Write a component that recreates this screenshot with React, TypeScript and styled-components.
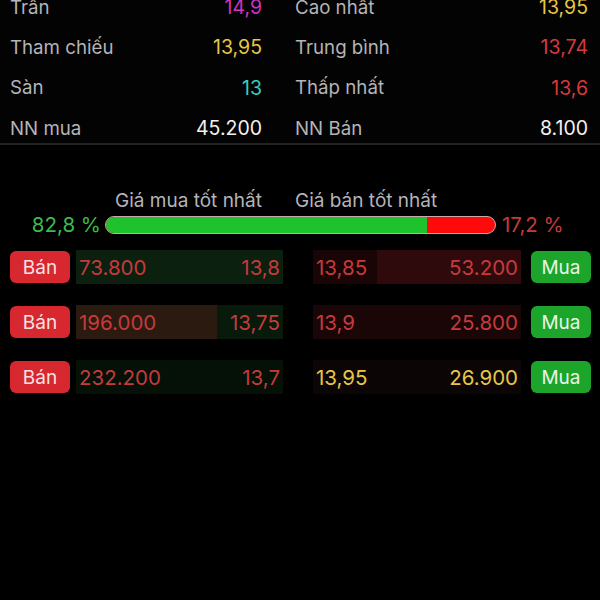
import styled, { createGlobalStyle } from 'styled-components';

const GlobalStyle = createGlobalStyle`
  html, body {
    margin: 0;
    padding: 0;
    background: #000;
    overflow: hidden;
  }
  body {
    font-family: Inter, 'Noto Sans', 'Liberation Sans', sans-serif;
  }
`;

const colors = {
  label: '#b4b4b8',
  white: '#f2f2f2',
  magenta: '#d232c4',
  yellow: '#e8c646',
  cyan: '#35cfc0',
  red: '#d8393c',
  dimRed: '#c63a3c',
  green: '#3dbb4a',
};

type Stat = { label: string; value: string; color: string };

const leftStats: Stat[] = [
  { label: 'Trần', value: '14,9', color: colors.magenta },
  { label: 'Tham chiếu', value: '13,95', color: colors.yellow },
  { label: 'Sàn', value: '13', color: colors.cyan },
  { label: 'NN mua', value: '45.200', color: colors.white },
];

const rightStats: Stat[] = [
  { label: 'Cao nhất', value: '13,95', color: colors.yellow },
  { label: 'Trung bình', value: '13,74', color: colors.red },
  { label: 'Thấp nhất', value: '13,6', color: colors.red },
  { label: 'NN Bán', value: '8.100', color: colors.white },
];

type Order = {
  bidVol: string;
  bidPrice: string;
  bidBg: string;
  bidFill: number;
  bidFillColor: string;
  askPrice: string;
  askVol: string;
  askBg: string;
  askFill: number;
  askFillColor: string;
  askColor: string;
};

const orders: Order[] = [
  {
    bidVol: '73.800',
    bidPrice: '13,8',
    bidBg: '#0c2010',
    bidFill: 0,
    bidFillColor: 'transparent',
    askPrice: '13,85',
    askVol: '53.200',
    askBg: '#1a0506',
    askFill: 69,
    askFillColor: '#2e0a0c',
    askColor: colors.dimRed,
  },
  {
    bidVol: '196.000',
    bidPrice: '13,75',
    bidBg: '#081a0b',
    bidFill: 68,
    bidFillColor: '#2a1a10',
    askPrice: '13,9',
    askVol: '25.800',
    askBg: '#1a0607',
    askFill: 0,
    askFillColor: 'transparent',
    askColor: colors.dimRed,
  },
  {
    bidVol: '232.200',
    bidPrice: '13,7',
    bidBg: '#051006',
    bidFill: 0,
    bidFillColor: 'transparent',
    askPrice: '13,95',
    askVol: '26.900',
    askBg: '#0b0605',
    askFill: 0,
    askFillColor: 'transparent',
    askColor: colors.yellow,
  },
];

export default function App() {
  return (
    <>
      <GlobalStyle />
      <Screen>
        <StatsSection>
          <StatColumn>
            {leftStats.map((s) => (
              <StatRow key={s.label}>
                <StatLabel>{s.label}</StatLabel>
                <StatValue $color={s.color}>{s.value}</StatValue>
              </StatRow>
            ))}
          </StatColumn>
          <StatColumn>
            {rightStats.map((s) => (
              <StatRow key={s.label}>
                <StatLabel>{s.label}</StatLabel>
                <StatValue $color={s.color}>{s.value}</StatValue>
              </StatRow>
            ))}
          </StatColumn>
        </StatsSection>

        <BookSection>
          <BestLabels>
            <BestLabel $align="right">Giá mua tốt nhất</BestLabel>
            <BestLabel $align="left">Giá bán tốt nhất</BestLabel>
          </BestLabels>
          <RatioRow>
            <Percent $color={colors.green} $align="right">
              82,8 %
            </Percent>
            <RatioBar>
              <RatioFill style={{ width: '82.4%' }} />
            </RatioBar>
            <Percent $color={colors.dimRed} $align="left">
              17,2 %
            </Percent>
          </RatioRow>

          <OrderList>
            {orders.map((o) => (
              <OrderRow key={o.bidVol}>
                <BidSide>
                  <ActionButton $kind="sell">Bán</ActionButton>
                  <DepthCell $bg={o.bidBg}>
                    <DepthFill
                      $side="left"
                      $color={o.bidFillColor}
                      style={{ width: `${o.bidFill}%` }}
                    />
                    <CellText $color={colors.dimRed}>{o.bidVol}</CellText>
                    <CellText $color={colors.dimRed}>{o.bidPrice}</CellText>
                  </DepthCell>
                </BidSide>
                <AskSide>
                  <DepthCell $bg={o.askBg}>
                    <DepthFill
                      $side="right"
                      $color={o.askFillColor}
                      style={{ width: `${o.askFill}%` }}
                    />
                    <CellText $color={o.askColor}>{o.askPrice}</CellText>
                    <CellText $color={o.askColor}>{o.askVol}</CellText>
                  </DepthCell>
                  <ActionButton $kind="buy">Mua</ActionButton>
                </AskSide>
              </OrderRow>
            ))}
          </OrderList>
        </BookSection>
      </Screen>
    </>
  );
}

const Screen = styled.div`
  width: 600px;
  height: 600px;
  overflow: hidden;
  background: #000;
`;

const StatsSection = styled.div`
  display: grid;
  grid-template-columns: 252px 293px;
  column-gap: 33px;
  padding: 0 12px 0 10px;
  margin-top: -13px;
  height: 156px;
  border-bottom: 2px solid #232327;
  background: #030303;
`;

const StatColumn = styled.div`
  display: grid;
  grid-auto-rows: 40.3px;
`;

const StatRow = styled.div`
  display: flex;
  align-items: center;
  justify-content: space-between;
  font-size: 19px;
`;

const StatLabel = styled.span`
  color: ${colors.label};
  font-size: 18.7px;
`;

const StatValue = styled.span<{ $color: string }>`
  color: ${(p) => p.$color};
  font-size: 19.5px;
`;

const BookSection = styled.div`
  padding-top: 45px;
`;

const BestLabels = styled.div`
  display: grid;
  grid-template-columns: 252px 293px;
  column-gap: 33px;
  padding: 0 12px 0 10px;
  height: 22px;
`;

const BestLabel = styled.span<{ $align: 'left' | 'right' }>`
  color: ${colors.label};
  font-size: 19px;
  line-height: 22px;
  text-align: ${(p) => p.$align};
`;

const RatioRow = styled.div`
  display: grid;
  grid-template-columns: 101px 391px 1fr;
  column-gap: 4px;
  align-items: center;
  margin-top: 0;
  height: 24px;
`;

const Percent = styled.span<{ $color: string; $align: 'left' | 'right' }>`
  color: ${(p) => p.$color};
  font-size: 20.5px;
  text-align: ${(p) => p.$align};
  padding-left: ${(p) => (p.$align === 'left' ? '2px' : '0')};
`;

const RatioBar = styled.div`
  height: 18px;
  border-radius: 9px;
  background: #ff0a0a;
  border: 1.5px solid #c9a9a9;
  box-sizing: border-box;
  overflow: hidden;
  display: flex;
`;

const RatioFill = styled.div`
  height: 100%;
  background: #1ec22c;
`;

const OrderList = styled.div`
  display: flex;
  flex-direction: column;
  gap: 21px;
  margin-top: 14px;
`;

const OrderRow = styled.div`
  display: flex;
  align-items: center;
  gap: 30px;
  padding-left: 10px;
  height: 34px;
`;

const BidSide = styled.div`
  display: grid;
  grid-template-columns: 60px 207px;
  column-gap: 6px;
  align-items: center;
`;

const AskSide = styled.div`
  display: grid;
  grid-template-columns: 208px 60px;
  column-gap: 10px;
  align-items: center;
`;

const ActionButton = styled.div<{ $kind: 'buy' | 'sell' }>`
  height: 32px;
  border-radius: 6px;
  display: flex;
  align-items: center;
  justify-content: center;
  font-size: 19px;
  color: ${(p) => (p.$kind === 'sell' ? '#f6e2e2' : '#e6f6e6')};
  background: ${(p) => (p.$kind === 'sell' ? '#d7272f' : '#1ca52a')};
`;

const DepthCell = styled.div<{ $bg: string }>`
  position: relative;
  height: 34px;
  background: ${(p) => p.$bg};
  display: flex;
  align-items: center;
  justify-content: space-between;
  padding: 0 3px;
  box-sizing: border-box;
`;

const DepthFill = styled.div<{ $side: 'left' | 'right'; $color: string }>`
  position: absolute;
  top: 0;
  bottom: 0;
  ${(p) => p.$side}: 0;
  background: ${(p) => p.$color};
`;

const CellText = styled.span<{ $color: string }>`
  position: relative;
  color: ${(p) => p.$color};
  font-size: 20.5px;
`;
